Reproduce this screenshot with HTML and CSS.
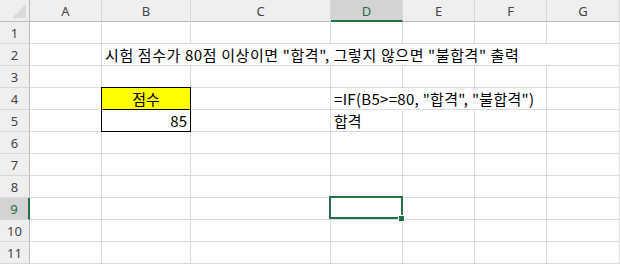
FILE: index.html
```html
<!DOCTYPE html>
<html>
<head>
  <meta charset="utf-8">
  <link rel="stylesheet" href="styles.css">
</head>
<body>
  <div class="sheet">
    <!-- column headers -->
    <div class="corner"><div class="tri"></div></div>
    <div class="ch">A</div>
    <div class="ch">B</div>
    <div class="ch">C</div>
    <div class="ch active">D</div>
    <div class="ch">E</div>
    <div class="ch">F</div>
    <div class="ch">G</div>

    <div class="rh">1</div>
    <div class="c"></div><div class="c"></div><div class="c"></div><div class="c"></div><div class="c"></div><div class="c"></div><div class="c"></div>

    <div class="rh">2</div>
    <div class="c"></div>
    <div class="c span6 txt title">시험 점수가 80점 이상이면 "합격", 그렇지 않으면 "불합격" 출력</div>

    <div class="rh">3</div>
    <div class="c"></div><div class="c"></div><div class="c"></div><div class="c"></div><div class="c"></div><div class="c"></div><div class="c"></div>

    <div class="rh">4</div>
    <div class="c"></div>
    <div class="c boxed head txt">점수</div>
    <div class="c"></div>
    <div class="c span3 txt formula">=IF(B5&gt;=80, "합격", "불합격")</div>
    <div class="c"></div>

    <div class="rh">5</div>
    <div class="c"></div>
    <div class="c boxed num txt">85</div>
    <div class="c"></div>
    <div class="c txt">합격</div>
    <div class="c"></div><div class="c"></div><div class="c"></div>

    <div class="rh">6</div>
    <div class="c"></div><div class="c"></div><div class="c"></div><div class="c"></div><div class="c"></div><div class="c"></div><div class="c"></div>

    <div class="rh">7</div>
    <div class="c"></div><div class="c"></div><div class="c"></div><div class="c"></div><div class="c"></div><div class="c"></div><div class="c"></div>

    <div class="rh">8</div>
    <div class="c"></div><div class="c"></div><div class="c"></div><div class="c"></div><div class="c"></div><div class="c"></div><div class="c"></div>

    <div class="rh active">9</div>
    <div class="c"></div><div class="c"></div><div class="c"></div>
    <div class="c selected"><span class="handle"></span></div>
    <div class="c"></div><div class="c"></div><div class="c"></div>

    <div class="rh">10</div>
    <div class="c"></div><div class="c"></div><div class="c"></div><div class="c"></div><div class="c"></div><div class="c"></div><div class="c"></div>

    <div class="rh">11</div>
    <div class="c"></div><div class="c"></div><div class="c"></div><div class="c"></div><div class="c"></div><div class="c"></div><div class="c"></div>
  </div>
</body>
</html>
```

FILE: styles.css
```css
html, body {
  margin: 0;
  background: #ffffff;
  overflow: hidden;
}
.sheet {
  display: grid;
  grid-template-columns: 30px 72px 89px 140px 72px 72px 72px 73px;
  grid-template-rows: repeat(12, 22px);
  width: 620px;
  font-family: "Noto Sans CJK KR", "Noto Sans", sans-serif;
}
.sheet > div {
  box-sizing: border-box;
}

/* headers */
.corner {
  background: #efefef;
  border-right: 1px solid #bcbcbc;
  border-bottom: 1px solid #bcbcbc;
  position: relative;
}
.tri {
  position: absolute;
  right: 3px;
  bottom: 3px;
  width: 0;
  height: 0;
  border-left: 14px solid transparent;
  border-bottom: 14px solid #dadada;
}
.ch {
  background: #efefef;
  border-right: 1px solid #d8d8d8;
  border-bottom: 1px solid #bcbcbc;
  color: #444444;
  font-family: "Noto Sans", sans-serif;
  font-size: 13px;
  display: flex;
  align-items: center;
  justify-content: center;
  padding-top: 1px;
}
.ch.active {
  background: #d3d3d3;
  color: #1e6e42;
  border-bottom: 2px solid #217346;
}
.rh {
  background: #efefef;
  border-right: 1px solid #bcbcbc;
  border-bottom: 1px solid #d8d8d8;
  color: #444444;
  font-family: "Noto Sans", sans-serif;
  font-size: 13px;
  display: flex;
  align-items: center;
  justify-content: center;
}
.rh.active {
  background: #d3d3d3;
  color: #1e6e42;
  border-right: 2px solid #217346;
}

/* cells */
.c {
  border-right: 1px solid #dadada;
  border-bottom: 1px solid #dadada;
  position: relative;
}
.txt {
  font-size: 15px;
  line-height: 21px;
  color: #000000;
  padding: 0 3px;
  white-space: nowrap;
}
.title {
  letter-spacing: 0.6px;
}
.formula {
  letter-spacing: 0.3px;
}
.span6 {
  grid-column: span 6;
}
.span3 {
  grid-column: span 3;
}
.head {
  background: #ffff00;
  text-align: center;
}
.num {
  text-align: right;
}
.boxed::after {
  content: "";
  position: absolute;
  left: -1px;
  top: -1px;
  right: -1px;
  bottom: -1px;
  border: 1px solid #000000;
}

/* active cell */
.selected::after {
  content: "";
  position: absolute;
  left: -2px;
  top: -2px;
  right: -1px;
  bottom: 0;
  border: 2px solid #217346;
}
.handle {
  position: absolute;
  right: -2px;
  bottom: -2px;
  width: 5px;
  height: 5px;
  background: #217346;
  box-shadow: 0 0 0 1px #ffffff;
  z-index: 1;
}
```
